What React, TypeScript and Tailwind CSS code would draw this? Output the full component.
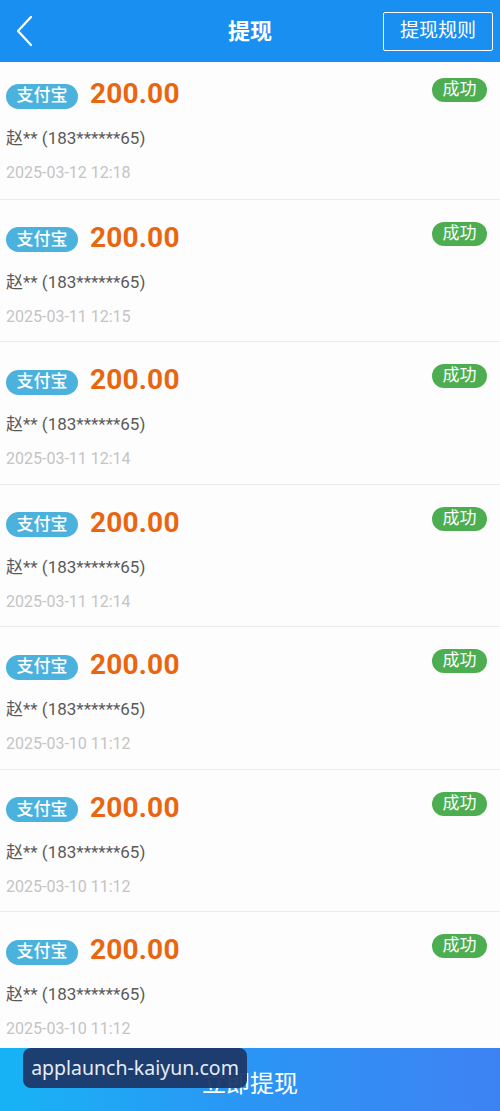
const records = [
  { date: '2025-03-12 12:18' },
  { date: '2025-03-11 12:15' },
  { date: '2025-03-11 12:14' },
  { date: '2025-03-11 12:14' },
  { date: '2025-03-10 11:12' },
  { date: '2025-03-10 11:12' },
  { date: '2025-03-10 11:12' },
];

const font = { fontFamily: "Roboto, 'Noto Sans CJK SC', sans-serif" };

function RecordItem({ date, first }: { date: string; first: boolean }) {
  return (
    <div
      className={`shrink-0 border-b border-[#ececec] bg-[#fdfdfd] pl-[6px] pr-[13px] ${
        first ? 'h-[137.5px] pt-[20px]' : 'h-[142.5px] pt-[26px]'
      }`}
    >
      <div className="flex items-start justify-between">
        <div className="flex items-center">
          <span className="flex h-[25px] w-[72px] items-center justify-center rounded-full bg-[#4bb2de] text-[17px] font-medium text-white">
            支付宝
          </span>
          <span className="ml-[12px] -translate-y-[2px] text-[28px] font-bold leading-none tracking-[0.2px] text-[#e9650f]">200.00</span>
        </div>
        <span className="-mt-[4px] flex h-[24px] w-[55px] items-center justify-center rounded-full bg-[#4cae50] text-[17px] text-white">
          成功
        </span>
      </div>
      <div className="mt-[17px] text-[17px] leading-[22px] text-[#5a5a5a]">赵** (183******65)</div>
      <div className="mt-[13px] text-[16px] leading-[22px] text-[#c4c4c4]">{date}</div>
    </div>
  );
}

export default function App() {
  return (
    <div className="flex h-[1111px] w-[500px] flex-col overflow-hidden bg-[#fdfdfd]" style={font}>
      <div className="relative z-10 flex h-[62px] shrink-0 items-center justify-between bg-[#1990f1] px-[13px]">
        <svg width="20" height="32" viewBox="0 0 20 32" className="ml-[2px]">
          <path d="M16 2 L3 16 L16 30" fill="none" stroke="white" strokeWidth="2.2" strokeLinecap="round" strokeLinejoin="round" />
        </svg>
        <span className="absolute left-1/2 top-1/2 -translate-x-1/2 -translate-y-1/2 text-[22px] font-bold text-white">
          提现
        </span>
        <span className="-mr-[6px] flex h-[39px] w-[110px] items-center justify-center rounded-[2px] border border-white text-[19px] text-white">
          提现规则
        </span>
      </div>

      <div className="flex min-h-0 flex-1 flex-col overflow-hidden">
        {records.map((r, i) => (
          <RecordItem key={i} date={r.date} first={i === 0} />
        ))}
      </div>

      <div className="relative flex h-[63px] shrink-0 items-center justify-center bg-gradient-to-r from-[#16b3f6] via-[#2a95f4] to-[#3d82f3] pt-[8px]">
        <span className="text-[24px] text-white">立即提现</span>
        <div
          className="absolute left-[23px] top-0 flex h-[40px] w-[224px] items-center justify-center rounded-[8px] bg-[#1c3868]/95 text-[19.5px] text-[#e6ecf6]"
          style={{ fontFamily: "'Noto Sans', 'Open Sans', sans-serif" }}
        >
          applaunch-kaiyun.com
        </div>
      </div>
    </div>
  );
}
